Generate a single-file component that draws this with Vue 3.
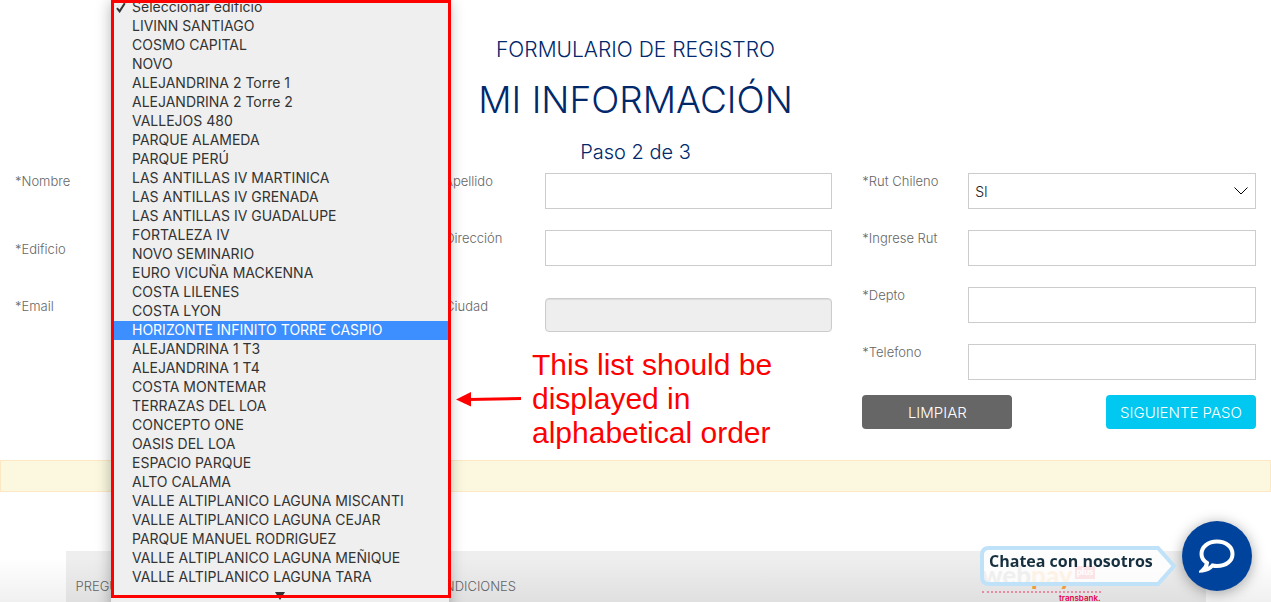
<script setup>
import { onMounted, ref } from 'vue'

const buildings = [
  'Seleccionar edificio', 'LIVINN SANTIAGO', 'COSMO CAPITAL', 'NOVO',
  'ALEJANDRINA 2 Torre 1', 'ALEJANDRINA 2 Torre 2', 'VALLEJOS 480',
  'PARQUE ALAMEDA', 'PARQUE PERÚ', 'LAS ANTILLAS IV MARTINICA',
  'LAS ANTILLAS IV GRENADA', 'LAS ANTILLAS IV GUADALUPE', 'FORTALEZA IV',
  'NOVO SEMINARIO', 'EURO VICUÑA MACKENNA', 'COSTA LILENES', 'COSTA LYON',
  'HORIZONTE INFINITO TORRE CASPIO', 'ALEJANDRINA 1 T3', 'ALEJANDRINA 1 T4',
  'COSTA MONTEMAR', 'TERRAZAS DEL LOA', 'CONCEPTO ONE', 'OASIS DEL LOA',
  'ESPACIO PARQUE', 'ALTO CALAMA', 'VALLE ALTIPLANICO LAGUNA MISCANTI',
  'VALLE ALTIPLANICO LAGUNA CEJAR', 'PARQUE MANUEL RODRIGUEZ',
  'VALLE ALTIPLANICO LAGUNA MEÑIQUE', 'VALLE ALTIPLANICO LAGUNA TARA',
]
const highlighted = 'HORIZONTE INFINITO TORRE CASPIO'

const list = ref(null)
onMounted(() => {
  list.value.selectedIndex = -1
})
</script>

<template>
  <div class="page">
    <header class="heading">
      <p class="sub">FORMULARIO DE REGISTRO</p>
      <h1>MI INFORMACIÓN</h1>
      <p class="step">Paso 2 de 3</p>
    </header>

    <form class="form" @submit.prevent>
      <div class="column">
        <div class="field tall">
          <label for="nombre">*Nombre</label>
          <input id="nombre" type="text" />
        </div>
        <div class="field">
          <label for="edificio">*Edificio</label>
          <div class="popup">
            <svg class="check" viewBox="0 0 10 11" aria-hidden="true">
              <path d="M1 6.2 3.6 9.4 8.8 1.2" />
            </svg>
            <select id="edificio" ref="list" :size="buildings.length">
              <option v-for="b in buildings" :key="b" :class="{ active: b === highlighted }">{{ b }}</option>
            </select>
            <svg class="more" viewBox="0 0 10 8" aria-hidden="true"><path d="M0 0H10L5 8Z" /></svg>
          </div>
        </div>
        <div class="field">
          <label for="email">*Email</label>
          <input id="email" type="email" />
        </div>
      </div>

      <div class="column">
        <div class="field">
          <label for="apellido">*Apellido</label>
          <input id="apellido" type="text" />
        </div>
        <div class="field tall">
          <label for="direccion">*Dirección</label>
          <input id="direccion" type="text" />
        </div>
        <div class="field">
          <label for="ciudad">*Ciudad</label>
          <input id="ciudad" type="text" disabled />
        </div>
      </div>

      <div class="column">
        <div class="field">
          <label for="chileno">*Rut Chileno</label>
          <div class="select-wrap">
            <select id="chileno" class="dropdown">
              <option>SI</option>
            </select>
            <svg class="chevron" viewBox="0 0 14 8" aria-hidden="true"><path d="M.5.5 7 7 13.500.5" /></svg>
          </div>
        </div>
        <div class="field">
          <label for="rut">*Ingrese Rut</label>
          <input id="rut" type="text" />
        </div>
        <div class="field">
          <label for="depto">*Depto</label>
          <input id="depto" type="text" />
        </div>
        <div class="field">
          <label for="telefono">*Telefono</label>
          <input id="telefono" type="tel" />
        </div>
        <div class="actions">
          <button type="reset" class="btn clear">LIMPIAR</button>
          <button type="submit" class="btn next">SIGUIENTE PASO</button>
        </div>
      </div>
    </form>

    <div class="alert" role="status"></div>

    <footer class="footer">
      <a href="#">PREGUNTAS</a>
      <a href="#">CONDICIONES</a>
      <div class="webpay">
        <div class="brand"><span class="web">web</span><span class="pay">pay</span><span class="plus">plus</span></div>
        <div class="transbank">transbank.</div>
      </div>
    </footer>

    <div class="shade"></div>
    <div class="frame"></div>

    <div class="note">
      <svg class="arrow" viewBox="0 0 66 16" aria-hidden="true">
        <path d="M12 8.500 65 7.500" stroke="#f00" stroke-width="3" />
        <path d="M0 8.500 15 1V15.500Z" fill="#f00" />
      </svg>
      <p>This list should be<br />displayed in<br />alphabetical order</p>
    </div>

    <div class="chat">
      <div class="balloon">
        <svg viewBox="0 0 198 40" aria-hidden="true">
          <path d="M9 2H178L194 20 178 38H9Q2 38 2 31V9Q2 2 9 2Z" />
        </svg>
        <span>Chatea con nosotros</span>
      </div>
      <button type="button" class="chat-btn" aria-label="Chat">
        <svg viewBox="0 0 36 34" aria-hidden="true">
          <path d="M18 2.500C27 2.500 33.500 8 33.500 15S27 27 18 27Q15.500 27 13.500 26.500Q9.500 31 3.500 31.500Q7.500 28 8 24Q2.500 20.500 2.500 15C2.500 8 9 2.500 18 2.500Z" />
        </svg>
      </button>
    </div>
  </div>
</template>

<style>
html, body { background: #fff; }
</style>

<style scoped>
* { box-sizing: border-box; }
.page {
  position: relative;
  height: 100vh;
  overflow: hidden;
  font-family: Inter, "Liberation Sans", sans-serif;
  color: #666;
}
.heading {
  padding-top: 38px;
  text-align: center;
  color: #00286b;
}
.heading p, .heading h1 { margin: 0; font-weight: 300; }
.heading .sub { font-size: 21px; line-height: 24px; }
.heading h1 { margin-top: 16px; font-size: 37px; line-height: 44px; }
.heading .step { margin-top: 18px; font-size: 20px; line-height: 24px; }

.form {
  display: grid;
  grid-template-columns: repeat(3, 1fr);
  margin-top: 9px;
}
.field {
  display: grid;
  grid-template-columns: 1fr 3fr;
  align-items: start;
  height: 57px;
}
.field.tall { height: 68px; }
.field label {
  padding-left: 15px;
  font-size: 13px;
  line-height: 16px;
  font-weight: 300;
  white-space: nowrap;
}
.field input, .select-wrap { margin: 0 15px; }
.field input, .dropdown {
  height: 36px;
  padding: 0 6px;
  border: 1px solid #ccc;
  border-radius: 0;
  background: #fff;
  font: 300 14px Inter, sans-serif;
  color: #222;
}
.field input:disabled {
  height: 34px;
  border-radius: 4px;
  background: #eee;
  box-shadow: inset 0 1px 1px rgba(0, 0, 0, 0.08);
}
.select-wrap { position: relative; }
.dropdown { width: 100%; appearance: none; }
.chevron {
  position: absolute;
  right: 8px;
  top: 14px;
  width: 14px;
  height: 8px;
  fill: none;
  stroke: #000;
}
.actions {
  display: flex;
  justify-content: space-between;
  padding: 0 15px;
  margin-top: -6px;
}
.btn {
  width: 150px;
  height: 34px;
  padding: 0;
  border: 0;
  border-radius: 4px;
  color: #fff;
  font: 300 15px Inter, sans-serif;
}
.clear { background: #666; }
.next { background: #00c8f0; }

.popup {
  position: absolute;
  z-index: 2;
  top: -2px;
  bottom: -8px;
  left: 111px;
  width: 338px;
  background: #efefef;
  box-shadow: 0 4px 14px rgba(0, 0, 0, 0.3);
}
.popup select {
  display: block;
  width: 100%;
  padding: 0;
  border: 0;
  outline: 0;
  overflow: hidden;
  scrollbar-width: none;
  background: transparent;
  font: 14px Inter, sans-serif;
}
.popup option {
  height: 19px;
  min-height: 19px;
  padding: 0 0 0 21px;
  line-height: 19px;
  color: #333;
}
.popup option.active { background: #3d8eff; color: #fff; }
.check {
  position: absolute;
  top: 4px;
  left: 5px;
  width: 10px;
  height: 11px;
  fill: none;
  stroke: #333;
  stroke-width: 2;
}
.more {
  display: block;
  width: 10px;
  height: 8px;
  margin: 5px auto 0;
  fill: #333;
}
.frame {
  position: absolute;
  z-index: 3;
  top: 0;
  bottom: 4px;
  left: 111px;
  width: 340px;
  border: 3px solid #f00;
  pointer-events: none;
}

.alert {
  height: 32px;
  margin-top: 31px;
  border: 1px solid #fde8c4;
  background: #fbf8df;
}
.footer {
  display: flex;
  max-width: 1140px;
  height: 120px;
  margin: 59px auto 0;
  padding: 27px 10px 0;
  background: #eee;
}
.footer a {
  width: 350px;
  font-size: 13px;
  line-height: 16px;
  font-weight: 300;
  color: #666;
  text-decoration: none;
}
.webpay {
  width: 119px;
  margin: -12px 0 0 206px;
}
.brand {
  display: flex;
  height: 27px;
  border-bottom: 2px dotted #f490aa;
  font: 900 26px/18px Lato, sans-serif;
}
.web { color: #888; }
.pay { color: #f7a040; }
.plus {
  height: 13px;
  margin-left: 2px;
  padding: 0 2px;
  background: #e0304a;
  color: #fff;
  font-size: 9px;
  line-height: 12px;
}
.transbank {
  text-align: right;
  font: 600 8px/10px Inter, sans-serif;
  color: #f00050;
}
.shade {
  position: absolute;
  right: 0;
  bottom: 0;
  left: 0;
  height: 44px;
  background: linear-gradient(rgba(0, 0, 0, 0), rgba(0, 0, 0, 0.06));
}

.note {
  position: absolute;
  z-index: 3;
  top: 348px;
  left: 456px;
  display: flex;
  align-items: center;
  gap: 10px;
  color: #f00;
}
.note p { margin: 0; font: 30px/34px "Liberation Sans", sans-serif; }
.arrow { width: 66px; height: 16px; }

.chat {
  position: fixed;
  z-index: 4;
  right: 19px;
  bottom: 11px;
  display: flex;
  align-items: flex-end;
  gap: 4px;
}
.balloon { position: relative; width: 198px; margin-bottom: 5px; }
.balloon svg {
  display: block;
  width: 198px;
  height: 40px;
  fill: rgba(255, 255, 255, 0.87);
  stroke: #bfe2f9;
  stroke-width: 4;
}
.balloon span {
  position: absolute;
  top: 4px;
  left: 9px;
  font: 700 16px/22px "Open Sans", sans-serif;
  color: #17303f;
  white-space: nowrap;
}
.chat-btn {
  display: grid;
  place-items: center;
  width: 70px;
  height: 70px;
  padding: 0;
  border: 0;
  border-radius: 50%;
  background: #00439c;
  box-shadow: 0 2px 14px rgba(0, 0, 0, 0.35);
}
.chat-btn svg {
  width: 36px;
  height: 34px;
  fill: none;
  stroke: #fff;
  stroke-width: 4;
}
</style>
